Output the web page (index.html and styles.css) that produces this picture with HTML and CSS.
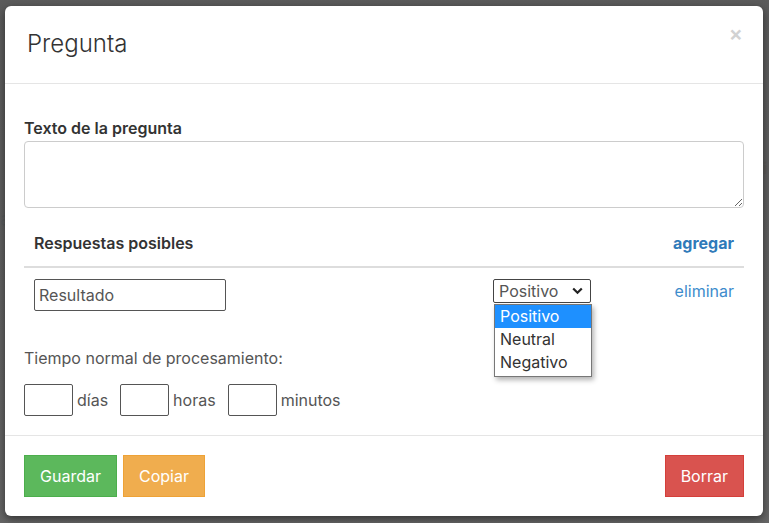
FILE: index.html
```html
<!DOCTYPE html>
<html lang="es">
<head>
<meta charset="utf-8">
<title>Pregunta</title>
<link rel="stylesheet" href="styles.css">
</head>
<body>
<div class="page-bits">
  <span class="bit-left">a</span>
  <span class="bit-right">i</span>
</div>
<div class="backdrop"></div>
<div class="modal">
  <div class="modal-header">
    <h4 class="modal-title">Pregunta</h4>
    <span class="close">×</span>
  </div>
  <div class="modal-body">
    <label class="field-label">Texto de la pregunta</label>
    <textarea class="question-text"></textarea>
    <div class="answers">
      <div class="answers-head">
        <span class="answers-title">Respuestas posibles</span>
        <a class="link-add">agregar</a>
      </div>
      <div class="answer-row">
        <input class="answer-input" type="text" value="Resultado">
        <div class="select-wrap">
          <div class="select-box">
            <span>Positivo</span>
            <svg class="chev" width="11" height="8" viewBox="0 0 11 8"><path d="M1.2 1.5 L5.5 5.8 L9.8 1.5" fill="none" stroke="#222" stroke-width="2.2"/></svg>
          </div>
          <div class="dropdown">
            <div class="opt selected">Positivo</div>
            <div class="opt">Neutral</div>
            <div class="opt">Negativo</div>
          </div>
        </div>
        <a class="link-del">eliminar</a>
      </div>
    </div>
    <p class="time-label">Tiempo normal de procesamiento:</p>
    <div class="time-row">
      <input class="time-input" type="text"><span class="unit">días</span>
      <input class="time-input" type="text"><span class="unit">horas</span>
      <input class="time-input" type="text"><span class="unit">minutos</span>
    </div>
  </div>
  <div class="modal-footer">
    <button class="btn btn-success">Guardar</button>
    <button class="btn btn-warning">Copiar</button>
    <button class="btn btn-danger">Borrar</button>
  </div>
</div>
</body>
</html>
```
FILE: styles.css
```css
html, body {
  margin: 0;
  height: 100%;
}
body {
  background: #ffffff;
  font-family: Inter, "Liberation Sans", sans-serif;
  color: #333;
  padding: 6px 0 0 5px;
  box-sizing: border-box;
  overflow: hidden;
  position: relative;
}
.page-bits {
  position: absolute;
  inset: 0;
}
.bit-left {
  position: absolute;
  left: 0;
  top: 208px;
  color: #337ab7;
  font-size: 18px;
}
.bit-right {
  position: absolute;
  left: 763px;
  top: 158px;
  color: #c0651a;
  font-size: 16px;
  font-weight: bold;
}
.backdrop {
  position: absolute;
  inset: 0;
  background: linear-gradient(#565656, #616161);
  opacity: 0.97;
}
.modal {
  position: relative;
  width: 758px;
  height: 510px;
  background: #fff;
  border-radius: 6px;
  box-shadow: 0 3px 9px rgba(0,0,0,0.5);
  display: flex;
  flex-direction: column;
}
.modal-header {
  height: 78px;
  border-bottom: 1px solid #e5e5e5;
  display: flex;
  align-items: center;
  justify-content: space-between;
  padding: 0 22px 0 22px;
  box-sizing: border-box;
}
.modal-title {
  margin: 0;
  font-size: 24px;
  font-weight: 300;
  color: #333;
  padding-bottom: 2px;
}
.close {
  font-size: 21px;
  font-weight: 600;
  color: #d2d2d2;
  align-self: flex-start;
  margin-top: 17px;
  margin-right: -2px;
  line-height: 1;
}
.modal-body {
  padding: 34px 19px 18px;
  flex: 1;
}
.field-label {
  display: block;
  font-weight: 600;
  font-size: 16px;
  line-height: 20px;
  margin-bottom: 3px;
  color: #333;
}
.question-text {
  display: block;
  width: 100%;
  height: 67px;
  box-sizing: border-box;
  border: 1px solid #ccc;
  border-radius: 4px;
  margin: 0;
  resize: vertical;
  font-family: inherit;
}
.answers {
  margin-top: 12px;
}
.answers-head {
  display: flex;
  justify-content: space-between;
  align-items: center;
  height: 46px;
  padding: 0 10px;
  border-bottom: 2px solid #ddd;
  font-size: 16px;
  font-weight: 600;
}
.link-add {
  color: #2f7ab9;
  font-weight: 700;
}
.answer-row {
  display: grid;
  grid-template-columns: 459px 1fr auto;
  align-items: start;
  padding: 11px 10px 0;
}
.answer-input {
  width: 192px;
  height: 32px;
  box-sizing: border-box;
  border: 1px solid #555;
  border-radius: 2px;
  padding: 0 4px;
  font-family: inherit;
  font-size: 16px;
  color: #555;
  margin: 0;
}
.select-wrap {
  position: relative;
  width: 98px;
}
.select-box {
  height: 24px;
  box-sizing: border-box;
  border: 1px solid #444;
  border-radius: 2px;
  display: flex;
  align-items: center;
  justify-content: space-between;
  padding: 0 7px 0 5px;
  font-size: 16px;
  color: #555;
}
.chev {
  display: block;
}
.dropdown {
  position: absolute;
  top: 25px;
  left: 1px;
  width: 98px;
  box-sizing: border-box;
  border: 1px solid #777;
  background: #fff;
  box-shadow: 2px 3px 5px rgba(0,0,0,0.3);
  padding-bottom: 2px;
}
.opt {
  height: 23px;
  line-height: 23px;
  padding-left: 5px;
  font-size: 16px;
  color: #333;
}
.opt.selected {
  background: #1e90ff;
  color: #fff;
}
.link-del {
  color: #3d8ccc;
  font-size: 16px;
  line-height: 24px;
}
.time-label {
  margin: 37px 0 0;
  font-size: 16px;
  line-height: 20px;
  color: #555;
}
.time-row {
  display: flex;
  align-items: center;
  margin-top: 16px;
}
.time-input {
  width: 49px;
  height: 32px;
  box-sizing: border-box;
  border: 1px solid #555;
  border-radius: 2px;
  margin: 0 4px 0 0;
  padding: 0;
}
.unit {
  font-size: 16px;
  color: #555;
  margin-right: 12px;
}
.modal-footer {
  border-top: 1px solid #e5e5e5;
  padding: 19px 19px 19px;
  display: flex;
  gap: 6px;
}
.btn {
  height: 42px;
  padding: 0 15px;
  font-family: inherit;
  font-size: 16px;
  color: #fff;
  border: 1px solid;
  border-radius: 0;
  margin: 0;
}
.btn-success {
  background: #5cb85c;
  border-color: #4cae4c;
}
.btn-warning {
  background: #f0ad4e;
  border-color: #eea236;
}
.btn-danger {
  background: #d9534f;
  border-color: #d43f3a;
  margin-left: auto;
}
```
